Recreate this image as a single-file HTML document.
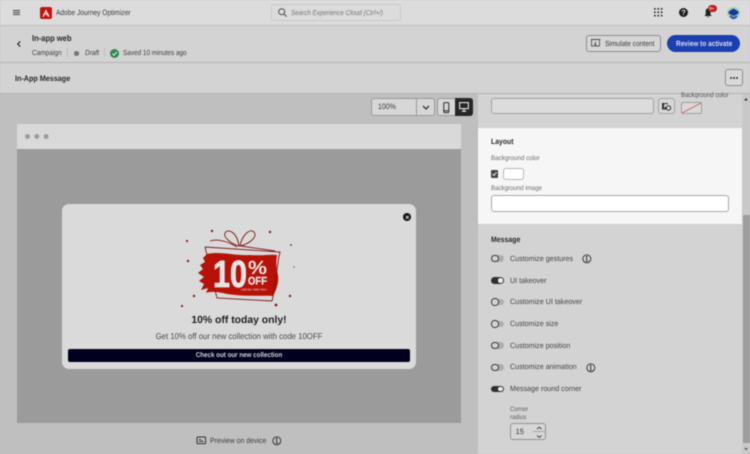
<!DOCTYPE html>
<html><head><meta charset="utf-8"><style>
*{box-sizing:border-box}
html,body{margin:0;padding:0}
body{width:750px;height:454px;overflow:hidden;background:#bfbfbf}
#w{position:relative;width:750px;height:454px;overflow:hidden;background:#bfbfbf;font-family:"Liberation Sans",sans-serif;color:#2c2c2c;text-rendering:geometricPrecision;filter:blur(.4px)}
.a{position:absolute}
.t{position:absolute;white-space:nowrap;line-height:1;transform-origin:left center}
.c{transform-origin:center}
.sw{position:absolute;left:491px;width:13px;height:6.5px;border-radius:4px;background:#aeaeae}
.sw i{position:absolute;left:0;top:-.5px;width:7.5px;height:7.5px;border-radius:50%;background:#d3d3d3;border:1.1px solid #3a3a3a}
.sw.on{background:#2f2f2f;width:13px}
.sw.on i{left:7px;top:1px;width:4.6px;height:4.6px;background:#eee;border:0}
.l{position:absolute;left:509.5px;font-size:7.6px;color:#454545;white-space:nowrap;line-height:1;transform:scaleX(.94);transform-origin:left center}
svg{position:absolute;overflow:visible}
</style></head><body><div id="w">
<!-- top bar -->
<div class="a" style="left:0;top:0;width:750px;height:26px;background:#dcdcdc;border-bottom:1px solid #bdbdbd"></div>
<div class="a" style="left:13px;top:10px;width:7px;height:1px;background:#444;box-shadow:0 2px 0 #444,0 4px 0 #444"></div>
<div class="a" style="left:40px;top:6.5px;width:12px;height:12px;border-radius:2px;background:#c4140e"></div>
<svg style="left:40px;top:6.5px" width="12" height="12"><path d="M6 2.4 L9.6 9.6 H7.8 L7 7.8 H5 L6.3 5.8 L6 5 L3.9 9.6 H2.4 Z" fill="#f4e9e9"/></svg>
<div class="t" style="left:55.5px;top:8.5px;font-size:7.7px;color:#3a3a3a;transform:scaleX(.86)">Adobe Journey Optimizer</div>
<div class="a" style="left:271px;top:4px;width:130px;height:17px;border:1px solid #c9c9c9;border-radius:3px;background:#dcdcdc"></div>
<svg style="left:278px;top:8px" width="9" height="9" fill="none" stroke="#4a4a4a" stroke-width="1"><circle cx="3.7" cy="3.7" r="3"/><path d="M6 6L8.6 8.6"/></svg>
<div class="t" style="left:291px;top:8.5px;font-size:7.2px;font-style:italic;color:#767676;transform:scaleX(.87)">Search Experience Cloud (Ctrl+/)</div>
<svg style="left:654px;top:8px" width="9" height="9" fill="#333"><rect x="0" y="0" width="1.7" height="1.7"/><rect x="3.4" y="0" width="1.7" height="1.7"/><rect x="6.8" y="0" width="1.7" height="1.7"/><rect x="0" y="3.4" width="1.7" height="1.7"/><rect x="3.4" y="3.4" width="1.7" height="1.7"/><rect x="6.8" y="3.4" width="1.7" height="1.7"/><rect x="0" y="6.8" width="1.7" height="1.7"/><rect x="3.4" y="6.8" width="1.7" height="1.7"/><rect x="6.8" y="6.8" width="1.7" height="1.7"/></svg>
<div class="a" style="left:679px;top:8px;width:9px;height:9px;border-radius:50%;background:#1d1d1d"></div>
<div class="t" style="left:681.3px;top:9px;font-size:7.5px;font-weight:bold;color:#ddd">?</div>
<svg style="left:704px;top:8px" width="9" height="10"><path d="M4 0.5C6 .5 6.5 2 6.5 4V6.5L7.8 8H.4L1.7 6.5V4C1.7 2 2 .5 4 .5ZM3 8.6H5.2L4.1 9.8Z" fill="#222"/></svg>
<div class="a" style="left:708px;top:5px;width:8.5px;height:7px;border-radius:4px;background:#c01818"></div>
<div class="t" style="left:709.3px;top:6.7px;font-size:4.4px;font-weight:bold;color:#f2d7d7">9+</div>
<div class="a" style="left:727px;top:7px;width:13px;height:12px;border-radius:50%;background:#a5d2ac"></div>
<svg style="left:727px;top:7px" width="13" height="13"><path d="M6.5 1.5 L11.5 4.5 V6.5 L6.5 9 L1.6 6.5 V4.5Z" fill="#123a9e"/><path d="M3 8 L6.5 10 L10 8 V10.5 L6.5 12.5 L3 10.5Z" fill="#2d55b8"/></svg>

<!-- campaign header -->
<div class="a" style="left:0;top:26px;width:750px;height:37px;background:#d3d3d3;border-bottom:1px solid #b4b4b4"></div>
<svg style="left:16px;top:40px" width="6" height="8" fill="none" stroke="#222" stroke-width="1.2"><path d="M4.2 1.4L1.8 4L4.2 6.6"/></svg>
<div class="t" style="left:32px;top:34px;font-size:8.6px;font-weight:bold;color:#2a2a2a;transform:scaleX(.88)">In-app web</div>
<div class="t" style="left:32px;top:49.3px;font-size:7.4px;color:#3e3e3e;transform:scaleX(.88)">Campaign</div>
<div class="a" style="left:67px;top:48px;width:1px;height:9px;background:#bcbcbc"></div>
<div class="a" style="left:74px;top:51px;width:4.5px;height:4.5px;border-radius:50%;background:#777"></div>
<div class="t" style="left:84.5px;top:49.3px;font-size:7.4px;font-style:italic;color:#3e3e3e;transform:scaleX(.88)">Draft</div>
<div class="a" style="left:104px;top:48px;width:1px;height:9px;background:#bcbcbc"></div>
<div class="a" style="left:110px;top:48.5px;width:9px;height:9px;border-radius:50%;background:#2d8a4e"></div>
<svg style="left:110px;top:48.5px" width="9" height="9" fill="none" stroke="#e8e8e8" stroke-width="1.1"><path d="M2.4 4.6L4 6.2L6.8 3"/></svg>
<div class="t" style="left:123px;top:49.3px;font-size:7.4px;color:#3e3e3e;transform:scaleX(.865)">Saved 10 minutes ago</div>
<div class="a" style="left:586px;top:35px;width:75px;height:17px;border:1px solid #8e8e8e;border-radius:3px;background:#d6d6d6"></div>
<svg style="left:591px;top:39px" width="10" height="9" fill="none" stroke="#444" stroke-width=".8"><rect x=".5" y=".5" width="8" height="6.5"/><path d="M0 .5H9.5M4.5 2.5V5.5M3 5L6 7"/></svg>
<div class="t" style="left:604.5px;top:39.7px;font-size:7.5px;color:#3c3c3c;transform:scaleX(.885)">Simulate content</div>
<div class="a" style="left:667px;top:35px;width:73px;height:17px;border-radius:9px;background:#1b3eb0"></div>
<div class="t" style="left:675.5px;top:39.5px;font-size:7.6px;font-weight:bold;color:#d9def0;transform:scaleX(.855)">Review to activate</div>

<!-- in-app bar -->
<div class="a" style="left:0;top:63px;width:750px;height:31px;background:#d3d3d3;border-bottom:1px solid #b4b4b4"></div>
<div class="t" style="left:14.5px;top:74.5px;font-size:8px;font-weight:bold;color:#2a2a2a;transform:scaleX(.9)">In-App Message</div>
<div class="a" style="left:724.5px;top:69px;width:18px;height:17px;border:1px solid #8e8e8e;border-radius:3px;background:#d9d9d9"></div>
<div class="a" style="left:729.5px;top:77px;width:2px;height:2px;border-radius:50%;background:#333;box-shadow:3px 0 0 #333,6px 0 0 #333"></div>

<!-- canvas toolbar -->
<div class="a" style="left:371px;top:98px;width:64px;height:18px;border:1px solid #9a9a9a;border-radius:3px;background:#d7d7d7"></div>
<div class="a" style="left:416px;top:98px;width:1px;height:18px;background:#9a9a9a"></div>
<div class="t" style="left:377.5px;top:103px;font-size:7.8px;color:#3c3c3c;transform:scaleX(.9)">100%</div>
<svg style="left:421.5px;top:104.5px" width="8" height="6" fill="none" stroke="#333" stroke-width="1.3"><path d="M1 1L4 4L7 1"/></svg>
<div class="a" style="left:437px;top:98px;width:36px;height:18px;border:1px solid #9a9a9a;border-radius:3px;background:#d7d7d7"></div>
<div class="a" style="left:455px;top:98px;width:18px;height:18px;border-radius:0 3px 3px 0;background:#262626"></div>
<svg style="left:443px;top:101.5px" width="7" height="12" fill="none" stroke="#2a2a2a" stroke-width="1"><rect x=".8" y=".6" width="5" height="10" rx="1"/><path d="M.8 8.8H5.8" /></svg>
<svg style="left:459px;top:102px" width="10" height="10" fill="none" stroke="#e6e6e6" stroke-width="1.1"><rect x=".6" y=".6" width="8.8" height="6"/><path d="M5 6.6V9M2.8 9.2H7.2"/></svg>

<!-- preview -->
<div class="a" style="left:17px;top:124px;width:444px;height:25px;background:#d9d9d9"></div>
<div class="a" style="left:25px;top:134px;width:5px;height:5px;border-radius:50%;background:#9c9c9c;box-shadow:9.3px 0 0 #9c9c9c,18.6px 0 0 #9c9c9c"></div>
<div class="a" style="left:17px;top:149px;width:444px;height:274px;background:#9b9b9b"></div>
<div class="a" style="left:62px;top:204px;width:354px;height:165px;border-radius:7px;background:#dadada"></div>
<div class="a" style="left:402.5px;top:212.5px;width:8.5px;height:8.5px;border-radius:50%;background:#111"></div>
<svg style="left:402.5px;top:212.5px" width="9" height="9" stroke="#ddd" stroke-width="1"><path d="M2.8 2.8L5.8 5.8M5.8 2.8L2.8 5.8"/></svg>

<!-- gift -->
<svg style="left:175px;top:225px" width="125" height="85">
<path d="M32 29 C45 26 60 31 75 30 C88 31 97 29 102 30 C101 38 101 43 103 50 C104 56 102 64 98 71 C88 70 72 72 52 69 C44 67 36 66 31 68 L33 63 L26 65 L29 59 L24 56 L29 52 L23 48 L28 44 L25 40 L30 37 L28 33 Z" fill="#b81208"/>
<g fill="none" stroke="#7c1414" stroke-width=".9">
<path d="M35 16 C45 13 55 18 62 22"/>
<path d="M64 21 C56 19 48 12 50 8 C53 3 62 7 64 21Z"/>
<path d="M65 21 C67 10 75 3 79 7 C83 12 74 19 65 21Z"/>
<path d="M66 21 L100 26"/>
<path d="M30 22 L105 27 L104 31 L98 72 L97 76"/>
<path d="M30 22 L32 30 M40 65 L42 73 L97 76"/>
</g>
<text x="38" y="62" font-family="Liberation Sans" font-weight="bold" font-size="38" fill="#e6e6e6" stroke="#e6e6e6" stroke-width=".8" textLength="34" lengthAdjust="spacingAndGlyphs">10</text>
<text x="73" y="49" font-family="Liberation Sans" font-weight="bold" font-size="19" fill="#e6e6e6" textLength="19" lengthAdjust="spacingAndGlyphs">%</text>
<text x="73" y="59.5" font-family="Liberation Sans" font-weight="bold" font-size="11" fill="#e6e6e6" stroke="#e6e6e6" stroke-width=".3" textLength="19" lengthAdjust="spacingAndGlyphs">OFF</text>
<text x="66" y="65.5" font-family="Liberation Sans" font-size="2.8" fill="#e8e8e8" textLength="26">LIMITED TIME ONLY</text>
<g fill="#8a1a1a"><circle cx="37" cy="6" r="1.2"/><circle cx="12" cy="16" r="1.1"/><circle cx="95" cy="7" r="1.2"/><circle cx="116" cy="20" r=".9"/><circle cx="13" cy="36" r="1.2"/><circle cx="119" cy="42" r=".9" fill="#a86a6a"/><circle cx="19" cy="71" r="1.2"/><circle cx="115" cy="71" r="1.2"/><circle cx="7" cy="81" r="1.1"/><circle cx="101" cy="80" r="1.4"/></g>
</svg>

<div class="t c" style="left:62px;width:354px;text-align:center;top:316.4px;font-size:10.4px;font-weight:bold;color:#222">10% off today only!</div>
<div class="t c" style="left:62px;width:354px;text-align:center;top:332px;font-size:8.6px;color:#4a4a4a;transform:scaleX(.905)">Get 10% off our new collection with code 10OFF</div>
<div class="a" style="left:68px;top:349px;width:342px;height:13px;border-radius:2px;background:#01011f"></div>
<div class="t c" style="left:68px;width:342px;text-align:center;top:351.5px;font-size:7px;font-weight:bold;color:#cfcfd4;transform:scaleX(.89)">Check out our new collection</div>

<svg style="left:196px;top:435.5px" width="11" height="9" fill="none" stroke="#333" stroke-width="1"><rect x="1" y="1" width="8.6" height="6.6" rx=".8"/><path d="M3 3.5H5M3 5.3H7.5"/></svg>
<div class="t" style="left:210px;top:436.5px;font-size:7.6px;color:#3c3c3c;transform:scaleX(.915)">Preview on device</div>
<svg style="left:271.5px;top:435.5px" width="10" height="10" fill="none" stroke="#2d2d2d" stroke-width=".9"><circle cx="4.8" cy="4.8" r="4"/><path d="M4.8 4.2V7.2M3.9 7.2H5.8M3.9 4.2H4.8" /><circle cx="4.7" cy="2.7" r=".4"/></svg>

<!-- right panel -->
<div class="a" style="left:478px;top:94px;width:272px;height:360px;background:#d3d3d3"></div>
<div class="a" style="left:491px;top:97.5px;width:163px;height:16px;border:1px solid #a2a2a2;border-radius:3px;background:#dcdcdc"></div>
<div class="a" style="left:658px;top:97.5px;width:17px;height:16px;border:1px solid #a2a2a2;border-radius:3px;background:#d7d7d7"></div>
<svg style="left:662px;top:102px" width="10" height="9" fill="#2f2f2f"><path d="M0 1H5.5V2.5H2V6.5L3.5 4.5L5 6V7.5H0Z"/><circle cx="6.5" cy="6" r="2.2" fill="none" stroke="#2f2f2f" stroke-width="1"/><circle cx="3.5" cy="2.2" r=".7" fill="#d7d7d7"/></svg>
<div class="t" style="left:680.5px;top:92px;font-size:6.8px;color:#555;height:6px;overflow:hidden;line-height:7px;transform:scaleX(.9)">Background color</div>
<div class="a" style="left:680.5px;top:101.5px;width:21px;height:12px;border:1px solid #9f9f9f;border-radius:2px;background:#d9d9d9;overflow:hidden"></div>
<svg style="left:680.5px;top:101.5px" width="21" height="12"><path d="M1 11L20 1" stroke="#c85a5a" stroke-width=".9"/></svg>

<div class="a" style="left:478px;top:128px;width:264px;height:97px;background:#f6f6f6;border-bottom:1px solid #d0d0d0"></div>
<div class="t" style="left:491px;top:138px;font-size:7.8px;font-weight:bold;color:#2a2a2a;transform:scaleX(.88)">Layout</div>
<div class="t" style="left:491px;top:156.3px;font-size:6.8px;color:#6e6e6e;transform:scaleX(.92)">Background color</div>
<div class="a" style="left:491px;top:170px;width:7px;height:7.5px;border-radius:1px;background:#444"></div>
<svg style="left:491px;top:170px" width="7" height="8" fill="none" stroke="#eee" stroke-width="1"><path d="M1.5 4L3 5.5L5.5 2.2"/></svg>
<div class="a" style="left:503px;top:168px;width:21px;height:12px;border:1px solid #b6b6b6;border-radius:3px;background:#fff"></div>
<div class="t" style="left:491px;top:185.5px;font-size:6.8px;color:#6e6e6e;transform:scaleX(.9)">Background image</div>
<div class="a" style="left:491px;top:195px;width:238px;height:16.5px;border:1px solid #a9a9a9;border-radius:3px;background:#fff"></div>

<div class="t" style="left:491px;top:235.5px;font-size:7.8px;font-weight:bold;color:#2a2a2a;transform:scaleX(.89)">Message</div>
<div class="sw" style="top:255px"><i></i></div><div class="l" style="top:254.5px">Customize gestures</div>
<svg style="left:581.5px;top:254px" width="10" height="10" fill="none" stroke="#2d2d2d" stroke-width=".9"><circle cx="4.8" cy="4.8" r="4"/><path d="M4.8 4.2V7.2M3.9 7.2H5.8M3.9 4.2H4.8"/><circle cx="4.7" cy="2.7" r=".4"/></svg>
<div class="sw on" style="top:277px"><i></i></div><div class="l" style="top:276.5px">UI takeover</div>
<div class="sw" style="top:298.5px"><i></i></div><div class="l" style="top:298px">Customize UI takeover</div>
<div class="sw" style="top:320.5px"><i></i></div><div class="l" style="top:319.5px">Customize size</div>
<div class="sw" style="top:342px"><i></i></div><div class="l" style="top:341.5px">Customize position</div>
<div class="sw" style="top:364px"><i></i></div><div class="l" style="top:363.3px">Customize animation</div>
<svg style="left:586px;top:362.5px" width="10" height="10" fill="none" stroke="#2d2d2d" stroke-width=".9"><circle cx="4.8" cy="4.8" r="4"/><path d="M4.8 4.2V7.2M3.9 7.2H5.8M3.9 4.2H4.8"/><circle cx="4.7" cy="2.7" r=".4"/></svg>
<div class="sw on" style="top:385.5px"><i></i></div><div class="l" style="top:385px">Message round corner</div>
<div class="t" style="left:509.5px;top:405.5px;font-size:6.6px;line-height:8.4px;color:#5e5e5e;white-space:normal;width:30px;transform:scaleX(.9)">Corner<br>radius</div>
<div class="a" style="left:509.5px;top:423px;width:36px;height:17px;border:1px solid #939393;border-radius:3px;background:#d7d7d7"></div>
<div class="t" style="left:515.5px;top:428px;font-size:7.6px;color:#3a3a3a">15</div>
<div class="a" style="left:533px;top:431px;width:12px;height:1px;background:#a5a5a5"></div>
<svg style="left:536px;top:426px" width="7" height="13" fill="none" stroke="#333" stroke-width=".9"><path d="M1 3L3.3 1.2L5.6 3M1 9.5L3.3 11.3L5.6 9.5"/></svg>

<!-- scrollbar -->
<div class="a" style="left:742px;top:94px;width:8px;height:360px;background:#c9c9c9"></div>
<div class="a" style="left:742.5px;top:215px;width:7px;height:228px;background:#9d9d9d"></div>
<svg style="left:743px;top:97px" width="6" height="5" fill="#333"><path d="M3 1L5 3.5H1Z"/></svg>
<svg style="left:743px;top:447px" width="6" height="5" fill="#666"><path d="M3 3.5L5 1H1Z"/></svg>
</div></body></html>
